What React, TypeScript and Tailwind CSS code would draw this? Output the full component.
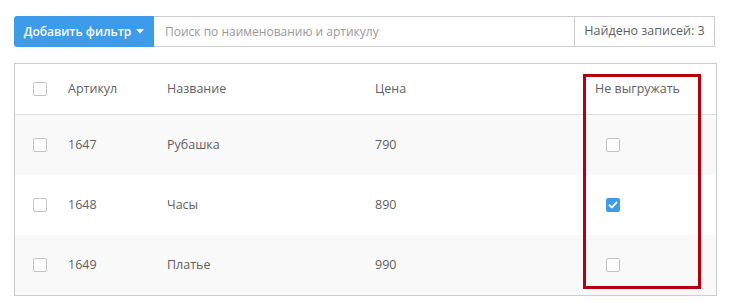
import React from 'react';

function Box({ checked = false }: { checked?: boolean }) {
  if (checked) {
    return (
      <span className="flex h-[14px] w-[14px] items-center justify-center rounded-[2px] bg-[#3d9be9]">
        <svg width="10" height="10" viewBox="0 0 10 10" fill="none">
          <path d="M1.6 5.2 L4 7.4 L8.4 2.6" stroke="white" strokeWidth="2" strokeLinecap="round" strokeLinejoin="round" />
        </svg>
      </span>
    );
  }
  return <span className="block h-[14px] w-[14px] rounded-[2px] border border-[#c4c4c4] bg-white" />;
}

export default function App() {
  const rows = [
    { sku: '1647', name: 'Рубашка', price: '790', off: false },
    { sku: '1648', name: 'Часы', price: '890', off: true },
    { sku: '1649', name: 'Платье', price: '990', off: false },
  ];

  const cols = 'grid grid-cols-[53px_99px_208px_220px_1fr] items-center';

  return (
    <div className="min-h-screen bg-white pl-[14px] pt-[16px] text-[12.5px] text-[#5f5f5f] font-['Open_Sans',sans-serif]">
      {/* Toolbar */}
      <div className="flex h-[31px] w-[701px]">
        <button className="flex w-[140px] items-center justify-center gap-[5px] rounded-l-[3px] bg-[#3d9be9] text-[12px] font-semibold text-white">
          Добавить фильтр
          <svg width="8" height="5" viewBox="0 0 8 5"><path d="M0 0 H8 L4 4.5 Z" fill="white" /></svg>
        </button>
        <div className="flex flex-1 items-center border-y border-[#ccc] pl-[11px] text-[12px] text-[#999]">
          Поиск по наименованию и артикулу
        </div>
        <div className="flex w-[141px] items-center justify-center border border-[#ccc]">
          Найдено записей: 3
        </div>
      </div>

      {/* Table */}
      <div className="relative mt-[16px] w-[703px] border border-[#ccc]">
        <div className={`${cols} h-[51px] border-b border-[#ddd] bg-white`}>
          <div className="pl-[18px]"><Box /></div>
          <div>Артикул</div>
          <div>Название</div>
          <div>Цена</div>
          <div>Не выгружать</div>
        </div>
        {rows.map((r, i) => (
          <div key={r.sku} className={`${cols} h-[60px] ${i % 2 === 0 ? 'bg-[#f9f9f9]' : 'bg-white'}`}>
            <div className="pl-[18px]"><Box /></div>
            <div>{r.sku}</div>
            <div>{r.name}</div>
            <div>{r.price}</div>
            <div className="pl-[11px]"><Box checked={r.off} /></div>
          </div>
        ))}

        {/* annotation */}
        <div className="pointer-events-none absolute left-[568px] top-[10px] h-[215px] w-[118px] border-[3px] border-[#b4000c]" />
      </div>
    </div>
  );
}
